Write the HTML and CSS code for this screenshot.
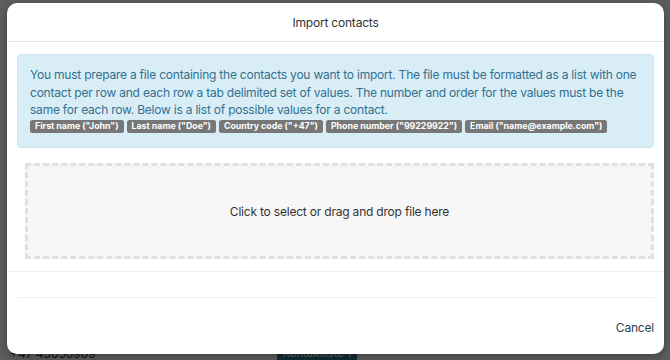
FILE: index.html
```html
<!DOCTYPE html>
<html>
<head>
<meta charset="utf-8">
<link rel="stylesheet" href="styles.css">
</head>
<body>
<div class="page">
  <div class="bg-phone">+47 45050909</div>
  <div class="bg-badge">Kontaktliste 1</div>
</div>
<div class="overlay"></div>
<div class="modal">
  <div class="modal-header">Import contacts</div>
  <div class="modal-body">
    <div class="alert">
      <p>You must prepare a file containing the contacts you want to import. The file must be formatted as a list with one contact per row and each row a tab delimited set of values. The number and order for the values must be the same for each row. Below is a list of possible values for a contact.</p>
      <div class="labels">
        <span class="label">First name ("John")</span>
        <span class="label">Last name ("Doe")</span>
        <span class="label">Country code ("+47")</span>
        <span class="label">Phone number ("99229922")</span>
        <span class="label">Email ("name@example.com")</span>
      </div>
    </div>
    <div class="dropzone">Click to select or drag and drop file here</div>
  </div>
  <div class="modal-footer">
    <div class="rule"></div>
    <div class="actions"><button class="btn-cancel">Cancel</button></div>
  </div>
</div>
</body>
</html>
```
FILE: styles.css
```css
html, body {
  margin: 0;
  padding: 0;
  width: 670px;
  height: 360px;
  overflow: hidden;
  font-family: Inter, "Noto Sans", sans-serif;
}
.page {
  position: absolute;
  inset: 0;
  background: #f4f4f4;
}
.bg-phone {
  position: absolute;
  left: 10px;
  top: 347px;
  font-size: 12px;
  line-height: 13px;
  color: #333;
}
.bg-badge {
  position: absolute;
  left: 277px;
  top: 347px;
  padding: 0 6px;
  font-size: 11px;
  line-height: 13px;
  background: #2b7a8a;
  color: #fff;
}
.overlay {
  position: absolute;
  inset: 0;
  background: rgba(0, 0, 0, 0.62);
}
.modal {
  position: absolute;
  left: 7px;
  top: 3px;
  width: 657px;
  height: 351px;
  background: #fff;
  border-radius: 10px;
  box-shadow: 0 3px 10px rgba(0, 0, 0, 0.3);
  display: flex;
  flex-direction: column;
  box-sizing: border-box;
}
.modal-header {
  height: 38px;
  border-bottom: 1px solid #e8e8e8;
  display: flex;
  align-items: center;
  justify-content: center;
  font-size: 12px;
  letter-spacing: -0.2px;
  color: #333;
}
.modal-body {
  padding: 12px 10px 12px 10px;
  border-bottom: 1px solid #eeeeee;
  display: flex;
  flex-direction: column;
  gap: 15px;
}
.alert {
  background: #d9edf7;
  border: 1px solid #cfe6f2;
  border-radius: 4px;
  padding: 11px 12px 11px 12px;
  color: #31708f;
  height: 94px;
  box-sizing: border-box;
}
.alert p {
  margin: 0;
  font-size: 12px;
  letter-spacing: -0.22px;
  line-height: 17.5px;
}
.labels {
  display: flex;
  gap: 3px;
  margin-top: 1px;
}
.label {
  flex: none;
  white-space: nowrap;
  display: inline-block;
  background: #777;
  color: #fff;
  font-size: 8.8px;
  font-weight: 700;
  line-height: 10px;
  padding: 1px 5px 2px;
  border-radius: 2.5px;
}
.dropzone {
  margin: 0 0 0 8px;
  height: 96px;
  box-sizing: border-box;
  border: 3px dashed #e0e0e0;
  background: #f7f7f7;
  display: flex;
  align-items: center;
  justify-content: center;
  font-size: 12px;
  letter-spacing: -0.2px;
  color: #333;
}
.modal-footer {
  flex: 1;
  padding: 0 10px;
  display: flex;
  flex-direction: column;
}
.rule {
  margin-top: 25px;
  border-top: 1px solid #eeeeee;
}
.actions {
  flex: 1;
  display: flex;
  justify-content: flex-end;
  align-items: center;
}
.btn-cancel {
  background: none;
  border: none;
  padding: 0;
  font-family: Inter, "Noto Sans", sans-serif;
  font-size: 12px;
  letter-spacing: -0.2px;
  color: #2c3e50;
  margin-top: 3px;
}
```
